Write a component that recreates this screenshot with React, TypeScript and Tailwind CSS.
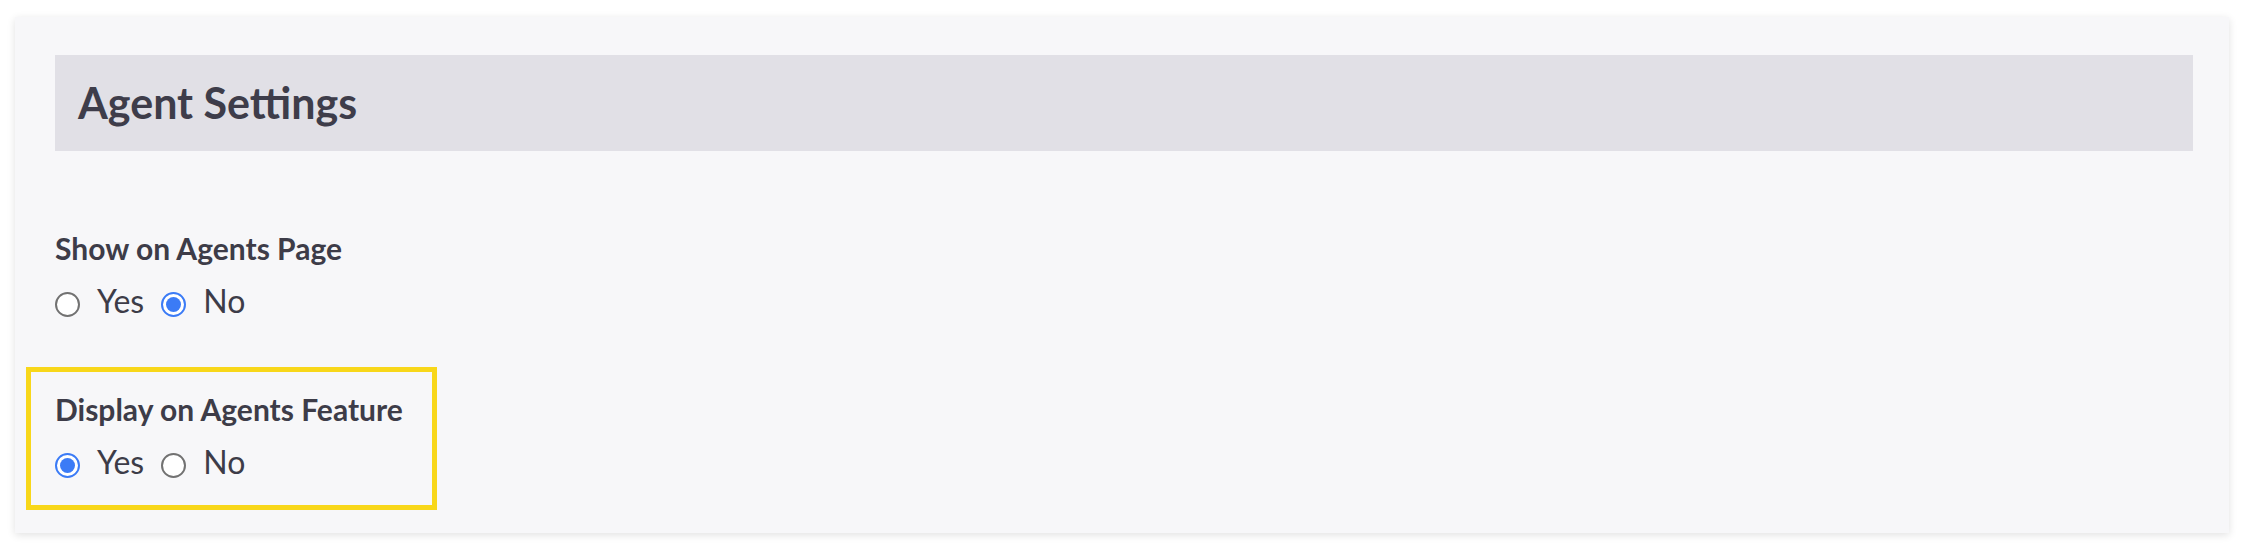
import React, { useState } from 'react';

type Choice = 'yes' | 'no';

interface RadioProps {
  checked: boolean;
  label: string;
  onSelect: () => void;
}

const Radio: React.FC<RadioProps> = ({ checked, label, onSelect }) => (
  <label className="flex items-center cursor-pointer" onClick={onSelect}>
    {checked ? (
      <span className="flex items-center justify-center w-[25px] h-[25px] rounded-full border-2 border-[#3b7bf6] bg-white">
        <span className="w-[15px] h-[15px] rounded-full bg-[#3b7bf6]" />
      </span>
    ) : (
      <span className="w-[25px] h-[25px] rounded-full border-2 border-[#727272] bg-white" />
    )}
    <span className="ml-[17px] mr-[17px] mb-[6px] text-[32px] leading-[38px] text-[#3d3c48]">{label}</span>
  </label>
);

interface FieldProps {
  title: string;
  value: Choice;
  onChange: (v: Choice) => void;
}

const Field: React.FC<FieldProps> = ({ title, value, onChange }) => (
  <div>
    <div className="text-[30px] leading-[36px] font-bold text-[#3d3c48]">{title}</div>
    <div className="flex items-center mt-[16px]">
      <Radio checked={value === 'yes'} label="Yes" onSelect={() => onChange('yes')} />
      <Radio checked={value === 'no'} label="No" onSelect={() => onChange('no')} />
    </div>
  </div>
);

export default function App() {
  const [showOnPage, setShowOnPage] = useState<Choice>('no');
  const [displayFeature, setDisplayFeature] = useState<Choice>('yes');

  return (
    <div className="w-full h-[549px] bg-white pt-[17px] pl-[15px] pr-[14px] font-['Lato','Noto_Sans',sans-serif]">
      <div className="h-[516px] bg-[#f7f7f9] shadow-[0_2px_8px_rgba(0,0,0,0.12)] pl-[40px] pr-[36px] pt-[38px]">
        <div className="h-[96px] bg-[#e1e0e6] flex items-center pl-[23px]">
          <h2 className="text-[43px] font-bold text-[#3e3d4a]">Agent Settings</h2>
        </div>

        <div className="mt-[79px]">
          <Field title="Show on Agents Page" value={showOnPage} onChange={setShowOnPage} />
        </div>

        <div className="mt-[41px] -ml-[29px] w-[411px] border-[5px] border-[#f8d71a] pl-[24px] pt-[19px] pb-[18px]">
          <Field title="Display on Agents Feature" value={displayFeature} onChange={setDisplayFeature} />
        </div>
      </div>
    </div>
  );
}
